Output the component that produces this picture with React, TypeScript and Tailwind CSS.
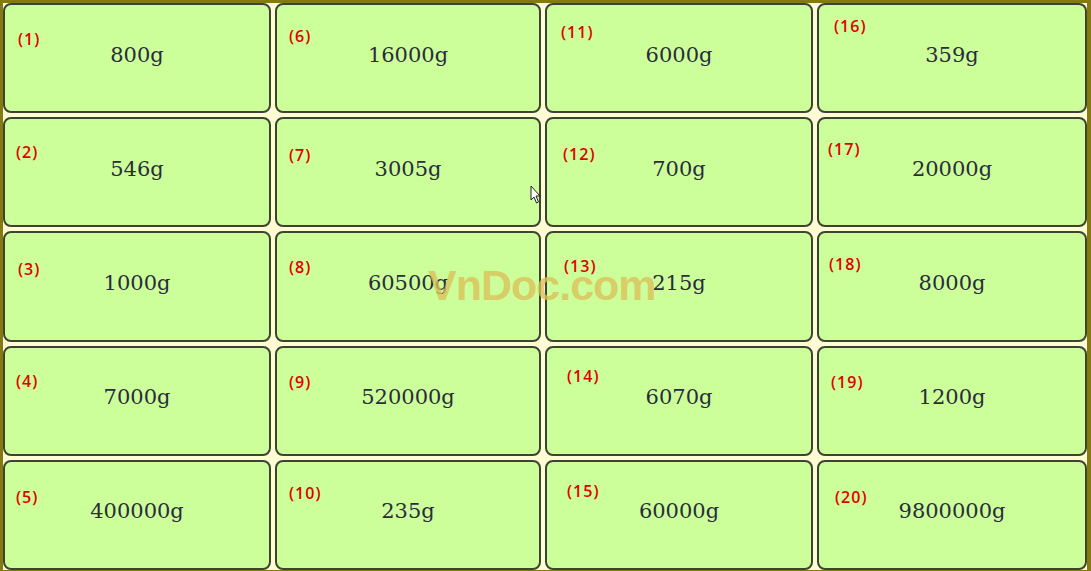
import React from "react";

type Cell = { n: number; v: string; lx: number; cy: number };

const cells: Cell[] = [
  { n: 1, v: "800g", lx: 15, cy: 36 },
  { n: 2, v: "546g", lx: 13, cy: 35 },
  { n: 3, v: "1000g", lx: 15, cy: 38 },
  { n: 4, v: "7000g", lx: 13, cy: 35 },
  { n: 5, v: "400000g", lx: 13, cy: 37 },
  { n: 6, v: "16000g", lx: 14, cy: 33 },
  { n: 7, v: "3005g", lx: 14, cy: 38 },
  { n: 8, v: "60500g", lx: 14, cy: 36 },
  { n: 9, v: "520000g", lx: 14, cy: 36 },
  { n: 10, v: "235g", lx: 14, cy: 33 },
  { n: 11, v: "6000g", lx: 16, cy: 29 },
  { n: 12, v: "700g", lx: 18, cy: 37 },
  { n: 13, v: "215g", lx: 19, cy: 35 },
  { n: 14, v: "6070g", lx: 22, cy: 30 },
  { n: 15, v: "60000g", lx: 22, cy: 31 },
  { n: 16, v: "359g", lx: 17, cy: 23 },
  { n: 17, v: "20000g", lx: 11, cy: 32 },
  { n: 18, v: "8000g", lx: 12, cy: 33 },
  { n: 19, v: "1200g", lx: 14, cy: 36 },
  { n: 20, v: "9800000g", lx: 18, cy: 37 },
];

export default function App() {
  return (
    <div className="relative w-[1091px] h-[571px] overflow-hidden bg-[#857a12] pt-[3px] pl-[3px] pr-[4px] pb-[1px]">
      <div className="h-full w-[1084px] bg-[#fffbd2] grid grid-cols-[268px_266px_268px_270px] grid-rows-5 grid-flow-col gap-[4px]">
        {cells.map((c) => (
          <div
            key={c.n}
            className="relative flex items-center justify-center pb-[6px] bg-[#ccff99] border-2 border-[#3d4233] rounded-[8px]"
          >
            <span
              className="absolute text-[16px] leading-[18px] font-semibold tracking-[1px] text-[#e00000]"
              style={{ left: c.lx - 2, top: c.cy - 11, fontFamily: '"Open Sans", "Noto Sans", sans-serif' }}
            >
              ({c.n})
            </span>
            <span
              className="text-[21px] leading-none text-[#2a2c3c]"
              style={{ fontFamily: '"DejaVu Serif", "Liberation Serif", serif' }}
            >
              {c.v}
            </span>
          </div>
        ))}
      </div>
      <div
        className="absolute left-[428px] top-[262px] text-[43px] leading-[46px] font-bold tracking-[-1px] text-[#dcc05a]/80 pointer-events-none"
        style={{ fontFamily: '"Liberation Sans", Arial, sans-serif' }}
      >
        VnDoc.com
      </div>
      <svg
        className="absolute left-[528px] top-[184px]"
        width="16"
        height="24"
        viewBox="0 0 16 24"
      >
        <path
          d="M3 2 L3 16 L6 13 L8.5 19 L10.5 18 L8 12 L12 12 Z"
          fill="#ffffff"
          stroke="#222"
          strokeWidth="1"
        />
      </svg>
    </div>
  );
}
